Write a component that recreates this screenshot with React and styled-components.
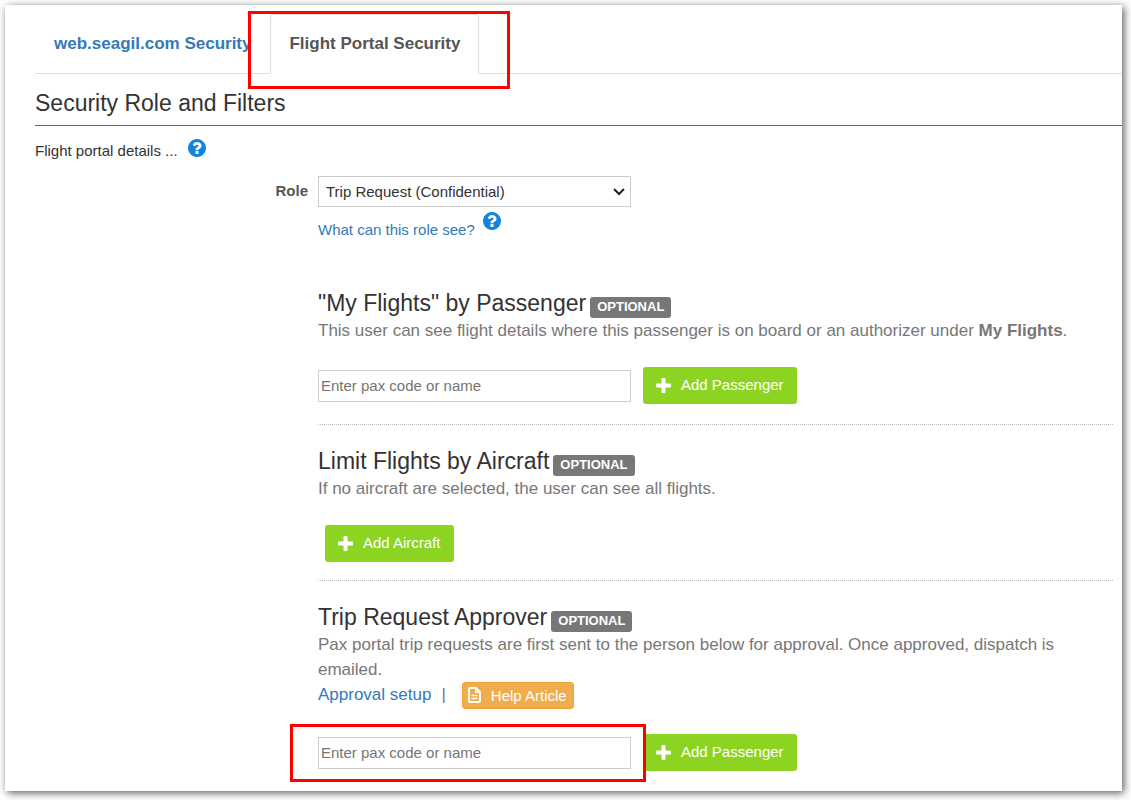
import React from "react";
import styled, { createGlobalStyle } from "styled-components";

const GlobalStyle = createGlobalStyle`
  * { box-sizing: border-box; }
  body {
    margin: 0;
    background: #fff;
    color: #333;
    font: 15px/22px "Liberation Sans", Arial, sans-serif;
  }
`;

const Panel = styled.main`
  margin: 5px 9px 9px 5px;
  padding: 9px 0 20px 30px;
  background: #fff;
  box-shadow: 2px 2px 8px rgba(0, 0, 0, 0.65);
`;

const Tabs = styled.nav`
  display: flex;
  height: 60px;
  border-bottom: 1px solid #ddd;
`;

const Tab = styled.a`
  position: relative;
  height: 60px;
  padding: 0 18px;
  border: 1px solid ${(p) => (p.$active ? "#ddd" : "transparent")};
  border-bottom-color: ${(p) => (p.$active ? "#fff" : "transparent")};
  border-radius: 4px 4px 0 0;
  color: ${(p) => (p.$active ? "#555" : "#337ab7")};
  font-size: 17px;
  font-weight: bold;
  line-height: 58px;
  white-space: nowrap;
  text-decoration: none;
`;

const Highlight = styled.span`
  position: absolute;
  z-index: 1;
  inset: ${(p) => p.$inset};
  border: 3px solid #f00;
  pointer-events: none;
`;

const Title = styled.h1`
  margin: 0;
  padding: 16px 0 9px;
  border-bottom: 1px solid #0f7fd6;
  font-size: 23px;
  font-weight: normal;
  line-height: 26px;
`;

const HelpLine = styled.div`
  display: flex;
  align-items: flex-start;
  gap: ${(p) => p.$gap};
  padding-top: ${(p) => p.$top};
`;

const HelpText = styled.span`
  padding-top: ${(p) => p.$drop};
`;

const Link = styled.a`
  color: #337ab7;
  text-decoration: none;
`;

const HelpButton = styled.button`
  display: block;
  width: 18px;
  height: 18px;
  padding: 0;
  border: 0;
  background: none;
  color: #0f84e0;
`;

const Form = styled.form`
  display: grid;
  grid-template-columns: 273px minmax(0, 1fr);
  column-gap: 10px;
  padding: 14px 9px 0 0;
`;

const RoleLabel = styled.label`
  color: #555;
  font-weight: bold;
  line-height: 30px;
  text-align: right;
`;

const SelectBox = styled.div`
  position: relative;
  width: 313px;

  svg {
    position: absolute;
    top: 11px;
    right: 6px;
    pointer-events: none;
  }
`;

const Select = styled.select`
  display: block;
  width: 100%;
  height: 31px;
  padding: 0 24px 0 7px;
  appearance: none;
  border: 1px solid #ccc;
  border-radius: 0;
  background: #fff;
  color: #333;
  font: inherit;
`;

const Sections = styled.div`
  grid-column: 2;
  padding-top: 26px;
`;

const Section = styled.section`
  padding: 23px 0 18px;
  border-bottom: 1px dotted #bbb;
  &:last-child {
    padding-bottom: 0;
    border-bottom: 0;
  }
`;

const Heading = styled.h2`
  display: flex;
  align-items: flex-end;
  gap: 4px;
  margin: 0 0 2px;
  font-size: 23px;
  font-weight: normal;
  line-height: 26px;
`;

const Badge = styled.span`
  margin-bottom: -2px;
  padding: 0 7px 2px;
  border-radius: 3px;
  background: #777;
  color: #fff;
  font-size: 13px;
  font-weight: bold;
  line-height: 19px;
`;

const Description = styled.p`
  margin: 0;
  color: #777;
  font-size: 17px;
  line-height: 25px;
`;

const Links = styled.div`
  display: flex;
  align-items: flex-start;
  gap: 10px;
  padding-bottom: 1px;
  color: #777;
  font-size: 17px;
  line-height: 25px;
`;

const ArticleButton = styled.button`
  display: flex;
  align-items: center;
  gap: 10px;
  height: 27px;
  margin-left: 6px;
  padding: 0 6px 1px 5px;
  border: 1px solid #eea236;
  border-radius: 3px;
  background: #f0ad4e;
  color: #fff;
  font: inherit;
  font-size: 15px;
`;

const AddRow = styled.div`
  display: flex;
  align-items: center;
  gap: 12px;
  padding: 24px 0 ${(p) => p.$bottom || "0"} ${(p) => p.$indent || "0"};
`;

const Field = styled.div`
  position: relative;
`;

const Input = styled.input`
  display: block;
  width: 313px;
  height: 32px;
  padding: 1px 2px;
  border: 1px solid #ccc;
  background: #fff;
  color: #333;
  font: inherit;
  &::placeholder { color: #757575; }
`;

const AddButton = styled.button`
  display: flex;
  align-items: center;
  gap: 10px;
  height: 37px;
  padding: 0 13px 1px;
  border: 0;
  border-radius: 3px;
  background: #8dd322;
  color: #fff;
  font: inherit;
`;

const PlusIcon = () => (
  <svg width="15" height="15" viewBox="0 0 15 15" fill="currentColor" aria-hidden="true">
    <path d="M6.500 0h2q1 0 1 1v4.500H14q1 0 1 1v2q0 1-1 1H9.500V14q0 1-1 1h-2q-1 0-1-1V9.500H1q-1 0-1-1v-2q0-1 1-1h4.500V1q0-1 1-1z" />
  </svg>
);

const FileIcon = () => (
  <svg width="13" height="16" viewBox="0 0 13 16" fill="none" stroke="currentColor" aria-hidden="true">
    <path d="M1.800 1H8l4 4v9.200q0 .8-.8.8H1.800q-.8 0-.8-.8V1.800Q1 1 1.800 1z" strokeWidth="1.800" />
    <path d="M7.700 1v4.300H12" strokeWidth="1.400" />
    <path d="M3.500 8.500h6M3.500 11.500h6" strokeWidth="1.400" />
  </svg>
);

const Chevron = () => (
  <svg width="12" height="9" viewBox="0 0 12 9" fill="none" stroke="#222" strokeWidth="2" aria-hidden="true">
    <path d="M1 2l5 5 5-5" />
  </svg>
);

const Help = () => (
  <HelpButton type="button" aria-label="Help">
    <svg width="18" height="18" viewBox="0 0 1536 1536" fill="currentColor" aria-hidden="true">
      <path d="M896 1248v-192q0-14-9-23t-23-9H672q-14 0-23 9t-9 23v192q0 14 9 23t23 9h192q14 0 23-9t9-23zm256-672q0-88-55.500-163T958 297t-170-41q-243 0-371 213-15 24 8 42l132 100q7 6 19 6 16 0 25-12 53-68 86-92 34-24 86-24 48 0 85.500 26t37.500 59q0 38-20 61t-68 45q-63 28-115.500 86.500T640 892v36q0 14 9 23t23 9h192q14 0 23-9t9-23q0-19 21.500-49.500T972 829q32-18 49-28.500t46-35 44.500-48 28-60.500 12.500-81zm384 192q0 209-103 385.500T1153.500 1433 768 1536t-385.500-103T103 1153.500 0 768t103-385.500T382.500 103 768 0t385.500 103T1433 382.500 1536 768z" />
    </svg>
  </HelpButton>
);

const PassengerRow = ({ bottom, label, highlighted }) => (
  <AddRow $bottom={bottom}>
    <Field>
      <Input type="text" placeholder="Enter pax code or name" aria-label={label} />
      {highlighted && <Highlight $inset="-13px -15px -13px -28px" />}
    </Field>
    <AddButton type="button">
      <PlusIcon />
      Add Passenger
    </AddButton>
  </AddRow>
);

export default function App() {
  return (
    <>
      <GlobalStyle />
      <Panel>
        <Tabs>
          <Tab href="#web">web.seagil.com Security</Tab>
          <Tab href="#portal" $active aria-current="page">
            Flight Portal Security
            <Highlight $inset="-4px -32px -16px -23px" />
          </Tab>
        </Tabs>
        <Title>Security Role and Filters</Title>
        <HelpLine $gap="10px" $top="13px">
          <HelpText $drop="1px">Flight portal details ...</HelpText>
          <Help />
        </HelpLine>
        <Form>
          <RoleLabel htmlFor="role">Role</RoleLabel>
          <div>
            <SelectBox>
              <Select id="role" defaultValue="confidential">
                <option value="confidential">Trip Request (Confidential)</option>
              </Select>
              <Chevron />
            </SelectBox>
            <HelpLine $gap="8px" $top="5px">
              <HelpText $drop="7px">
                <Link href="#role-help">What can this role see?</Link>
              </HelpText>
              <Help />
            </HelpLine>
          </div>
          <Sections>
            <Section>
              <Heading>
                "My Flights" by Passenger <Badge>OPTIONAL</Badge>
              </Heading>
              <Description>
                This user can see flight details where this passenger is on board or an authorizer under{" "}
                <b>My Flights</b>.
              </Description>
              <PassengerRow bottom="2px" label="My Flights passenger" />
            </Section>
            <Section>
              <Heading>
                Limit Flights by Aircraft <Badge>OPTIONAL</Badge>
              </Heading>
              <Description>If no aircraft are selected, the user can see all flights.</Description>
              <AddRow $indent="7px">
                <AddButton type="button">
                  <PlusIcon />
                  Add Aircraft
                </AddButton>
              </AddRow>
            </Section>
            <Section>
              <Heading>
                Trip Request Approver <Badge>OPTIONAL</Badge>
              </Heading>
              <Description>
                Pax portal trip requests are first sent to the person below for approval. Once approved,
                dispatch is emailed.
              </Description>
              <Links>
                <Link href="#approval">Approval setup</Link>
                <span>|</span>
                <ArticleButton type="button">
                  <FileIcon />
                  Help Article
                </ArticleButton>
              </Links>
              <PassengerRow label="Trip request approver" highlighted />
            </Section>
          </Sections>
        </Form>
      </Panel>
    </>
  );
}
